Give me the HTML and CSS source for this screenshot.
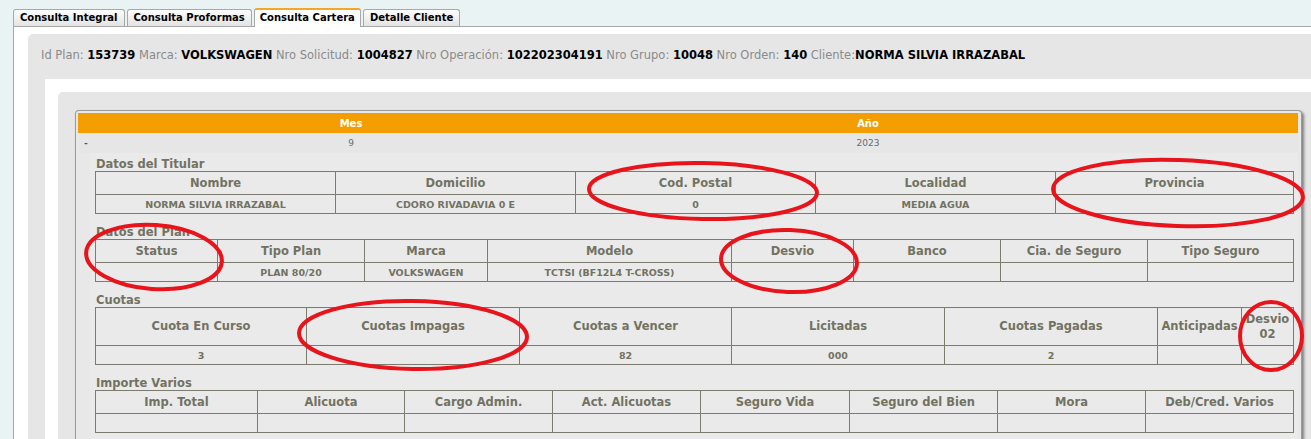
FILE: index.html
```html
<!DOCTYPE html>
<html lang="es">
<head>
<meta charset="utf-8">
<title>Consulta Cartera</title>
<link rel="stylesheet" href="styles.css">
</head>
<body>
<div class="tabs">
  <div class="tab">Consulta Integral</div>
  <div class="tab">Consulta Proformas</div>
  <div class="tab active">Consulta Cartera</div>
  <div class="tab">Detalle Cliente</div>
</div>
<div class="panel">
  <div class="outer">
    <div class="info">
      Id Plan: <b>153739</b> Marca: <b>VOLKSWAGEN</b> Nro Solicitud: <b>1004827</b> Nro Operación: <b>102202304191</b> Nro Grupo: <b>10048</b> Nro Orden: <b>140</b> Cliente:<b>NORMA SILVIA IRRAZABAL</b>
    </div>
    <div class="white">
      <div class="inner">
        <div class="card">
          <div class="period">
            <div class="ph"></div>
            <div class="ph">Mes</div>
            <div class="ph">Año</div>
            <div class="pd dash">-</div>
            <div class="pd">9</div>
            <div class="pd">2023</div>
          </div>
          <div class="content">
            <div class="sec first">
              <div class="sec-title">Datos del Titular</div>
              <table class="grid">
                <colgroup><col class="c240"><col class="c240"><col class="c240"><col class="c240"><col class="c238"></colgroup>
                <tr><th>Nombre</th><th>Domicilio</th><th>Cod. Postal</th><th>Localidad</th><th>Provincia</th></tr>
                <tr><td>NORMA SILVIA IRRAZABAL</td><td>CDORO RIVADAVIA 0 E</td><td>0</td><td>MEDIA AGUA</td><td></td></tr>
              </table>
            </div>
            <div class="sec">
              <div class="sec-title">Datos del Plan</div>
              <table class="grid">
                <colgroup><col class="c122"><col class="c147"><col class="c123"><col class="c244"><col class="c122"><col class="c147"><col class="c147"><col class="c146"></colgroup>
                <tr><th>Status</th><th>Tipo Plan</th><th>Marca</th><th>Modelo</th><th>Desvio</th><th>Banco</th><th>Cia. de Seguro</th><th>Tipo Seguro</th></tr>
                <tr><td></td><td>PLAN 80/20</td><td>VOLKSWAGEN</td><td>TCTSI (BF12L4 T-CROSS)</td><td></td><td></td><td></td><td></td></tr>
              </table>
            </div>
            <div class="sec">
              <div class="sec-title">Cuotas</div>
              <table class="grid tall">
                <colgroup><col class="c211"><col class="c213"><col class="c212"><col class="c213"><col class="c213"><col class="c84"><col class="c52"></colgroup>
                <tr><th>Cuota En Curso</th><th>Cuotas Impagas</th><th>Cuotas a Vencer</th><th>Licitadas</th><th>Cuotas Pagadas</th><th>Anticipadas</th><th>Desvio 02</th></tr>
                <tr><td>3</td><td></td><td>82</td><td>000</td><td>2</td><td></td><td></td></tr>
              </table>
            </div>
            <div class="sec">
              <div class="sec-title">Importe Varios</div>
              <table class="grid">
                <colgroup><col class="c162"><col class="c147"><col class="c148"><col class="c148"><col class="c149"><col class="c148"><col class="c148"><col class="c148"></colgroup>
                <tr><th>Imp. Total</th><th>Alicuota</th><th>Cargo Admin.</th><th>Act. Alicuotas</th><th>Seguro Vida</th><th>Seguro del Bien</th><th>Mora</th><th>Deb/Cred. Varios</th></tr>
                <tr><td></td><td></td><td></td><td></td><td></td><td></td><td></td><td></td></tr>
              </table>
            </div>
          </div>
        </div>
      </div>
    </div>
  </div>
</div>
<svg class="marks" width="1311" height="439" viewBox="0 0 1311 439" xmlns="http://www.w3.org/2000/svg">
  <g fill="none" stroke="#e8141c" stroke-width="4">
    <ellipse cx="703" cy="191" rx="114" ry="28" transform="rotate(1 703 191)"/>
    <ellipse cx="1178" cy="193" rx="125" ry="33" transform="rotate(2 1178 193)"/>
    <ellipse cx="154" cy="257" rx="68" ry="32" transform="rotate(4 154 257)"/>
    <ellipse cx="789" cy="261" rx="68" ry="31" transform="rotate(2 789 261)"/>
    <ellipse cx="413" cy="335" rx="114" ry="34" transform="rotate(1 413 335)"/>
    <ellipse cx="1271" cy="336" rx="31" ry="34"/>
  </g>
</svg>
</body>
</html>
```
FILE: styles.css
```css
* { box-sizing: border-box; }
html, body { margin: 0; padding: 0; }
body {
  background: #e9f3f4;
  font-family: "DejaVu Sans", Verdana, sans-serif;
  width: 1311px;
  height: 439px;
  overflow: hidden;
  position: relative;
}

.tabs {
  display: flex;
  align-items: flex-end;
  gap: 2px;
  padding: 9px 0 0 13px;
  height: 26px;
}
.tab {
  height: 17px;
  padding: 0 6px;
  border: 1px solid #a8a8a8;
  border-bottom: none;
  border-radius: 3px 3px 0 0;
  background: linear-gradient(#fdfdfd, #e3e3e3);
  font-size: 10px;
  font-weight: bold;
  color: #000;
  line-height: 16px;
  white-space: nowrap;
}
.tab.active {
  height: 19px;
  margin-bottom: -1px;
  padding: 0 5px;
  border-top: 2px solid #f5a623;
  background: #fff;
  position: relative;
  z-index: 1;
}

.panel {
  margin-left: 13px;
  border-left: 1px solid #a8a8a8;
  border-top: 1px solid #a8a8a8;
  background: #fff;
  padding: 7px 0 0 14px;
  height: 413px;
}
.outer {
  background: #e6e6e6;
  border-radius: 5px 0 0 0;
  height: 405px;
}
.info {
  padding: 13px 13px 16px;
  height: 45px;
  line-height: 16px;
  font-size: 11.5px;
  color: #8a8a8a;
  white-space: nowrap;
}
.info b { color: #000; }

.white {
  margin-left: 17px;
  background: #fff;
  padding: 13px 0 0 13px;
  height: 360px;
}
.inner {
  background: #e6e6e6;
  border-radius: 5px 0 0 0;
  padding: 18px 9px 0 17px;
  height: 347px;
}
.card {
  background: #e8e8e8;
  border: 1px solid #9a9a9a;
  border-bottom: none;
  border-radius: 4px 4px 0 0;
  box-shadow: 2px 2px 3px rgba(0, 0, 0, 0.45);
  padding: 2px 3px 0 2px;
  height: 329px;
}

.period {
  display: grid;
  grid-template-columns: 186px 174px 1fr;
}
.ph {
  background: #f39d00;
  color: #fff;
  font-weight: bold;
  font-size: 10px;
  height: 20px;
  line-height: 22px;
  text-align: center;
}
.pd {
  height: 20px;
  line-height: 21px;
  font-size: 9px;
  color: #6a6a6a;
  text-align: center;
  background: #e6e6e6;
}
.pd.dash {
  text-align: left;
  padding-left: 6px;
  color: #2a5c9a;
  font-weight: bold;
}

.content {
  margin-left: 12px;
  padding: 1px 5px 0 5px;
  background: #eaeaea;
  height: 286px;
}
.sec { margin-top: 8px; }
.sec.first { margin-top: 0; }
.sec-title {
  height: 17px;
  padding-top: 3px;
  line-height: 14px;
  font-size: 11.5px;
  font-weight: bold;
  color: #727262;
  padding-left: 1px;
}

.grid {
  width: 1198px;
  border-collapse: collapse;
  table-layout: fixed;
  color: #727262;
}
.grid th, .grid td {
  border: 1px solid #7b7b6e;
  padding: 0;
  text-align: center;
  font-weight: bold;
  white-space: nowrap;
  overflow: visible;
}
.grid th {
  height: 23px;
  font-size: 11.5px;
}
.grid td {
  height: 19px;
  font-size: 9.5px;
}
.grid.tall th {
  height: 38px;
  white-space: normal;
  line-height: 15px;
}

.c52 { width: 52px; }
.c84 { width: 84px; }
.c122 { width: 122px; }
.c123 { width: 123px; }
.c146 { width: 146px; }
.c147 { width: 147px; }
.c148 { width: 148px; }
.c149 { width: 149px; }
.c162 { width: 162px; }
.c211 { width: 211px; }
.c212 { width: 212px; }
.c213 { width: 213px; }
.c238 { width: 238px; }
.c240 { width: 240px; }
.c244 { width: 244px; }

.marks {
  position: absolute;
  top: 0;
  left: 0;
  pointer-events: none;
}
```
